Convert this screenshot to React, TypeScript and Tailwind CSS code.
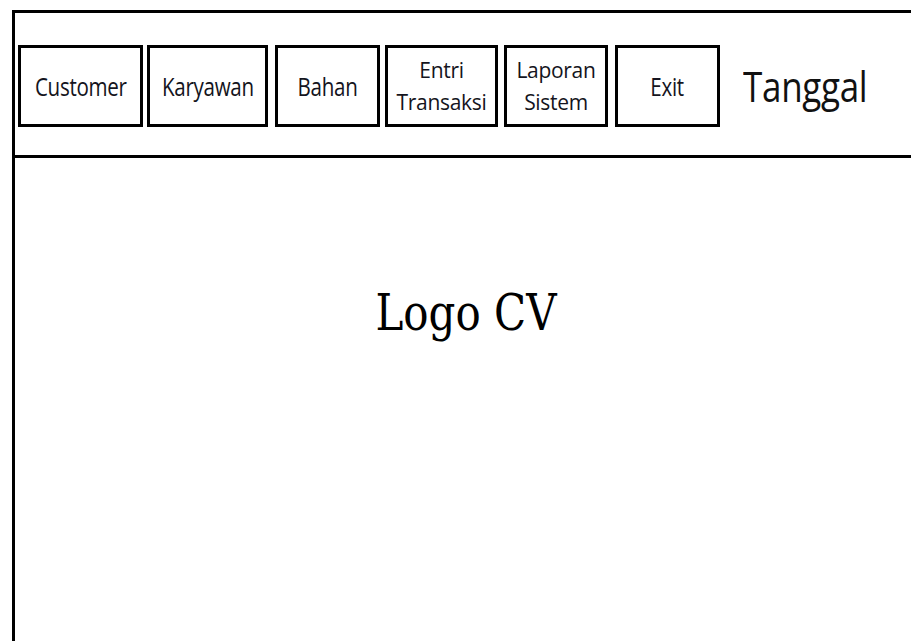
import React from "react";

const Btn = ({ w, ml, lines }: { w: string; ml: string; lines: string[] }) => (
  <div
    className={`${w} ${ml} h-[82px] border-[3px] border-black flex flex-col items-center justify-center text-center shrink-0`}
  >
    {lines.length === 1 ? (
      <span className="text-[21px] leading-[25px] font-medium text-[#141420] inline-block scale-y-[1.22] scale-x-[0.98] tracking-[-0.3px]">
        {lines[0]}
      </span>
    ) : (
      lines.map((l) => (
        <span key={l} className="text-[21px] leading-[32px] font-medium text-[#141420] block tracking-[-0.3px]">
          {l}
        </span>
      ))
    )}
  </div>
);

export default function App() {
  return (
    <div className="w-[911px] h-[641px] bg-white pl-3 pt-[10px] overflow-hidden" style={{ fontFamily: '"Open Sans", "Noto Sans", sans-serif' }}>
      <div className="h-[631px] border-l-[3px] border-t-[3px] border-black flex flex-col">
        <div className="h-[145px] border-b-[3px] border-black pt-[32px] pl-[3px] flex items-start shrink-0">
          <Btn w="w-[125px]" ml="ml-0" lines={["Customer"]} />
          <Btn w="w-[121px]" ml="ml-[4px]" lines={["Karyawan"]} />
          <Btn w="w-[105px]" ml="ml-[7px]" lines={["Bahan"]} />
          <Btn w="w-[113px]" ml="ml-[5px]" lines={["Entri", "Transaksi"]} />
          <Btn w="w-[104px]" ml="ml-[6px]" lines={["Laporan", "Sistem"]} />
          <Btn w="w-[105px]" ml="ml-[7px]" lines={["Exit"]} />
          <div className="ml-[23px] h-[82px] flex items-center">
            <span className="text-[35px] font-medium text-[#111] origin-center scale-y-[1.2] inline-block tracking-[-0.3px]">Tanggal</span>
          </div>
        </div>
        <div className="flex-1 flex justify-center pt-[134px] pl-[6px]">
          <span
            className="text-[42px] leading-none text-black inline-block scale-y-[1.2] h-fit"
            style={{ fontFamily: '"DejaVu Serif", "Liberation Serif", serif' }}
          >
            Logo CV
          </span>
        </div>
      </div>
    </div>
  );
}
